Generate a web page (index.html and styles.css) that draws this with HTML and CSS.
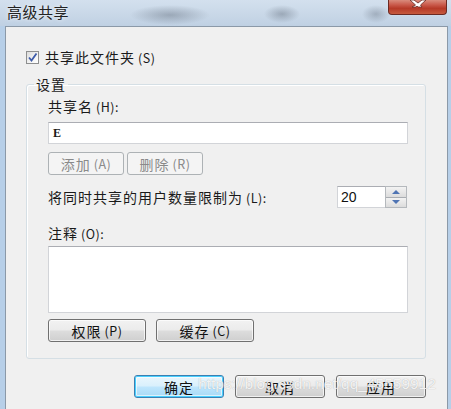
FILE: index.html
```html
<!DOCTYPE html>
<html lang="zh-CN">
<head>
<meta charset="utf-8">
<title>高级共享</title>
<link rel="stylesheet" href="styles.css">
</head>
<body>
<div class="titlebar">
  <div class="title">高级共享</div>
  <div class="close">
    <svg width="57" height="14" viewBox="0 0 57 14"><path d="M21 0 L25 0 L29 3 L33 0 L37 0 L31.5 5 L33 7 L29 7 L28 6 L27 7 L23 7 L26.5 5 Z" fill="#fff" stroke="#6a2b24" stroke-width="0.8"/></svg>
  </div>
</div>
<div class="frame">
  <div class="window">
    <div class="check-row">
      <span class="checkbox"><svg width="11" height="11" viewBox="0 0 11 11"><path d="M2 5.5 L4.5 8.5 L9.5 1.5" fill="none" stroke="#3d5ba9" stroke-width="1.8"/></svg></span>
      <span class="label">共享此文件夹<span class="mn">(S)</span></span>
    </div>
    <fieldset class="group">
      <legend class="legend">设置</legend>
      <div class="label">共享名<span class="mn">(H):</span></div>
      <div class="text-input"><span class="value-e">E</span></div>
      <div class="btn-row">
        <div class="btn disabled small">添加<span class="mn">(A)</span></div>
        <div class="btn disabled small">删除<span class="mn">(R)</span></div>
      </div>
      <div class="limit-row">
        <span class="label">将同时共享的用户数量限制为<span class="mn">(L):</span></span>
        <div class="spinner">
          <div class="spin-field">20</div>
          <div class="spin-arrows">
            <div class="arrow up"></div>
            <div class="arrow down"></div>
          </div>
        </div>
      </div>
      <div class="label comment-label">注释<span class="mn">(O):</span></div>
      <div class="textarea"></div>
      <div class="btn-row wide-row">
        <div class="btn wide">权限<span class="mn">(P)</span></div>
        <div class="btn wide">缓存<span class="mn">(C)</span></div>
      </div>
    </fieldset>
    <div class="footer">
      <div class="btn footer-btn default">确定</div>
      <div class="btn footer-btn">取消</div>
      <div class="btn footer-btn">应用</div>
    </div>
  </div>
</div>
<div class="watermark">https://blog.csdn.net/qq_45559912</div>
</body>
</html>
```
FILE: styles.css
```css
html, body {
  margin: 0;
  padding: 0;
}
body {
  position: relative;
  width: 451px;
  height: 409px;
  overflow: hidden;
  display: flex;
  flex-direction: column;
  background: #b7cfe8;
  font-family: "Noto Sans CJK SC", "Noto Sans", sans-serif;
  font-size: 14px;
  color: #1a1a1a;
}
.titlebar {
  height: 26px;
  flex: none;
  display: flex;
  align-items: flex-start;
  padding-left: 7px;
  background:
    radial-gradient(ellipse 40px 10px at 170px 15px, rgba(70,80,95,0.35), rgba(70,80,95,0) 100%),
    radial-gradient(ellipse 18px 9px at 282px 14px, rgba(70,80,95,0.35), rgba(70,80,95,0) 100%),
    radial-gradient(ellipse 14px 9px at 376px 14px, rgba(70,80,95,0.3), rgba(70,80,95,0) 100%),
    linear-gradient(180deg, #d3e0ee 0%, #c8d7e7 60%, #bfd0e3 100%);
}
.title {
  font-size: 15px;
  line-height: 22px;
  padding-top: 1px;
  letter-spacing: 0.5px;
  color: #222;
  text-shadow: 0 0 4px rgba(255,255,255,0.9);
}
.close {
  margin-left: auto;
  margin-right: 4px;
  width: 57px;
  height: 14px;
  border: 1px solid #6b2a23;
  border-top: none;
  border-radius: 0 0 4px 4px;
  background: linear-gradient(180deg, #d98b7c 0%, #c9594a 35%, #b63a28 60%, #c65a3e 100%);
  box-shadow: 0 0 1px rgba(255,255,255,0.7);
}
.close svg { display: block; }
.frame {
  flex: 1;
  display: flex;
  padding: 0 3px 0 5px;
}
.window {
  flex: 1;
  display: flex;
  flex-direction: column;
  align-items: flex-start;
  background: #f0f0f0;
  border: 1px solid #8b99a8;
  border-bottom: none;
  padding-left: 20px;
}
.label {
  line-height: 16px;
  letter-spacing: 1px;
  white-space: nowrap;
}
.mn {
  font-size: 12.5px;
  letter-spacing: 0.5px;
  margin-left: 3px;
}
.check-row {
  margin-top: 22px;
  display: flex;
  align-items: center;
  height: 16px;
  gap: 6px;
}
.checkbox {
  width: 11px;
  height: 11px;
  border: 1px solid #8e8f8f;
  background: linear-gradient(135deg, #dcdcdc 0%, #f4f4f4 60%, #ffffff 100%);
  display: flex;
}
.checkbox svg { display: block; }
.group {
  box-sizing: border-box;
  width: 400px;
  margin: 11px 0 0 0;
  padding: 6px 17px 16px 21px;
  border: 1px solid #d5dfe5;
  border-radius: 3px;
  box-shadow: inset 1px 1px 0 #fff;
}
.legend {
  padding: 0 2px;
  margin-left: -14px;
  line-height: 16px;
  letter-spacing: 1px;
}
.text-input {
  box-sizing: border-box;
  margin-top: 7px;
  width: 360px;
  height: 22px;
  background: #fff;
  border: 1px solid #d2d4d8;
  border-top-color: #abadb3;
  display: flex;
  align-items: center;
  padding-left: 4px;
}
.value-e {
  font-family: "Liberation Serif", serif;
  font-weight: bold;
  font-size: 12px;
}
.btn {
  box-sizing: border-box;
  height: 23px;
  display: flex;
  align-items: center;
  justify-content: center;
  border: 1px solid #707070;
  border-radius: 3px;
  background: linear-gradient(180deg, #f2f2f2 0%, #ebebeb 48%, #dddddd 52%, #cfcfcf 100%);
  box-shadow: inset 0 0 0 1px rgba(255,255,255,0.7);
  letter-spacing: 1px;
  white-space: nowrap;
  color: #111;
}
.btn.disabled {
  border-color: #adb2b5;
  background: #f4f4f4;
  color: #8a8a8a;
  box-shadow: none;
}
.btn-row {
  margin-top: 8px;
  display: flex;
  gap: 3px;
}
.small { width: 76px; }
.limit-row {
  margin-top: 11px;
  width: 360px;
  height: 22px;
  display: flex;
  align-items: center;
  justify-content: space-between;
}
.spinner {
  display: flex;
  width: 70px;
  height: 22px;
  margin-right: 1px;
}
.spin-field {
  box-sizing: border-box;
  width: 48px;
  height: 22px;
  background: #fff;
  border: 1px solid #d2d4d8;
  border-top-color: #abadb3;
  border-right: none;
  font-family: "Liberation Sans", Arial, sans-serif;
  font-size: 14px;
  line-height: 20px;
  padding-left: 3px;
  color: #111;
}
.spin-arrows {
  box-sizing: border-box;
  width: 22px;
  height: 22px;
  border: 1px solid #b5b9bd;
  display: flex;
  flex-direction: column;
}
.arrow {
  flex: 1;
  display: flex;
  align-items: center;
  justify-content: center;
  background: linear-gradient(180deg, #f3f3f3, #dcdcdc);
}
.arrow.up { border-bottom: 1px solid #a9adb2; }
.arrow.up::after {
  content: "";
  border-left: 4px solid transparent;
  border-right: 4px solid transparent;
  border-bottom: 4px solid #4f74b3;
}
.arrow.down::after {
  content: "";
  border-left: 4px solid transparent;
  border-right: 4px solid transparent;
  border-top: 4px solid #4f74b3;
}
.comment-label {
  margin-top: 17px;
}
.textarea {
  box-sizing: border-box;
  margin-top: 4px;
  width: 360px;
  height: 67px;
  background: #fff;
  border: 1px solid #d2d4d8;
  border-top-color: #abadb3;
}
.wide-row {
  margin-top: 6px;
  gap: 10px;
}
.wide { width: 98px; }
.footer {
  align-self: stretch;
  margin-top: 16px;
  display: flex;
  justify-content: flex-end;
  gap: 11px;
  padding-right: 21px;
}
.footer-btn { width: 90px; }
.btn.default {
  border-color: #3c7fb1;
  background: linear-gradient(180deg, #eaf6fd 0%, #d9f0fc 48%, #bee6fd 52%, #a7d9f5 100%);
  box-shadow: inset 0 0 0 1px #48d0ff, inset 0 0 0 2px rgba(255,255,255,0.6);
}
.watermark {
  position: absolute;
  left: 198px;
  top: 374px;
  font-family: "Liberation Sans", Arial, sans-serif;
  font-size: 15.5px;
  line-height: 20px;
  color: rgba(255,255,255,0.85);
  text-shadow: 0 0 1px rgba(120,120,120,0.6);
  white-space: nowrap;
}
```
